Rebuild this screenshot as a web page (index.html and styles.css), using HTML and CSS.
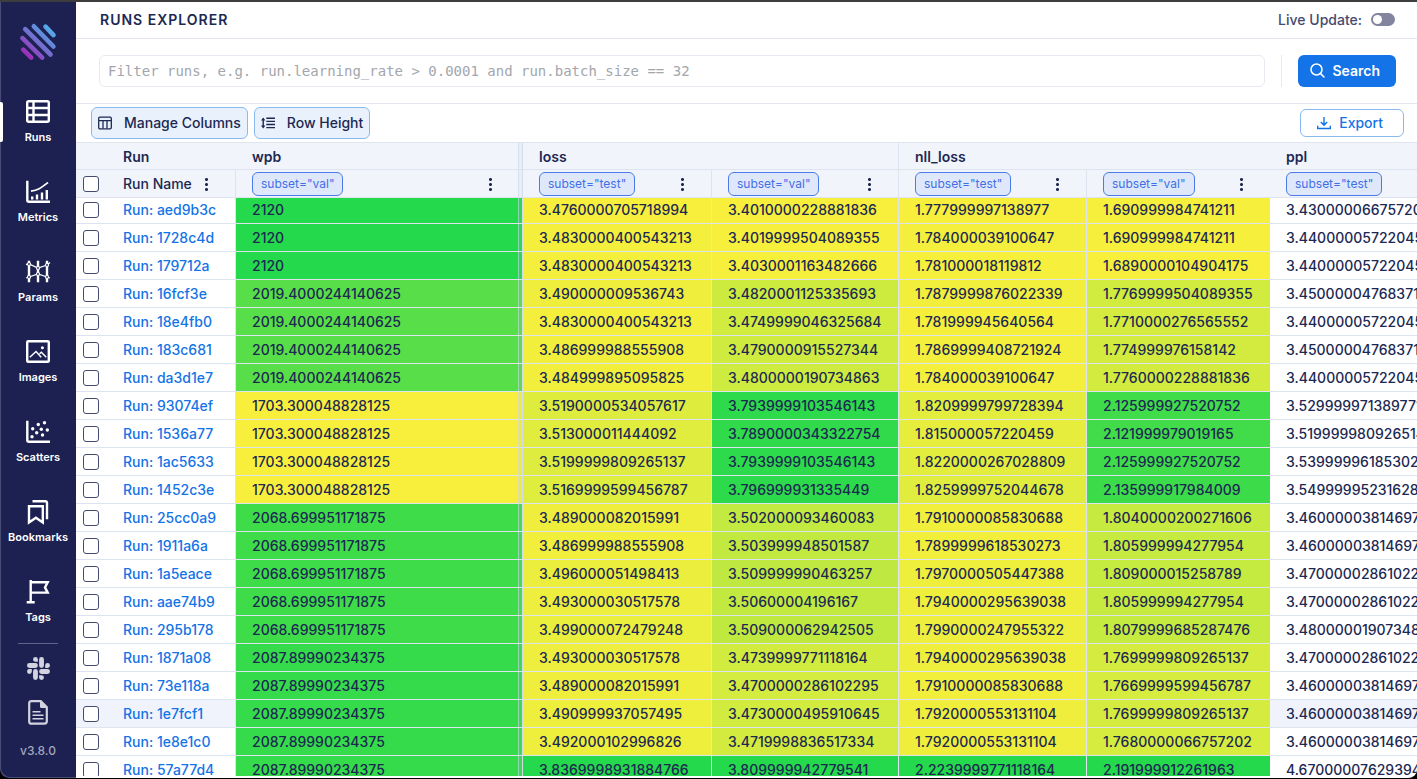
FILE: index.html
```
<!DOCTYPE html>
<html lang="en">
<head>
    <meta charset="UTF-8">
    <title>Runs Explorer</title>
    <link rel="stylesheet" href="styles.css">
</head>
<body>
<div class="app">
    <nav class="sidebar">
        <a class="logo" href="#">
            <svg width="38" height="38" viewBox="0 0 38 38" fill="none" stroke="url(#logoFill)" stroke-width="4.6" stroke-linecap="round">
                <defs>
                    <linearGradient id="logoFill" gradientUnits="userSpaceOnUse" x1="34" y1="3" x2="4" y2="35">
                        <stop offset="0" stop-color="#4cb8f0"/>
                        <stop offset="0.5" stop-color="#7270cf"/>
                        <stop offset="1" stop-color="#a81cb4"/>
                    </linearGradient>
                </defs>
                <path d="M26.5 3.7l8 8.4M14.8 3.3l19.6 20.2M6.2 6.2l25.3 25.3M3.4 15.1l19.8 19.5M4.2 26.6l8 8"/>
            </svg>
        </a>
        <a class="nav-item active" href="#">
            <svg class="nav-icon" viewBox="0 0 24 24">
                <rect x="1.2" y="1.2" width="21.6" height="20.6" rx="1.5"/>
                <path d="M7.5 1v21M1 8h22M1 15h22"/>
            </svg>
            <span>Runs</span>
        </a>
        <a class="nav-item" href="#">
            <svg class="nav-icon" viewBox="0 0 24 24">
                <path d="M1.3 .7v19.8a1.2 1.2 0 0 0 1.2 1.2H24"/>
                <path d="M5 11.2c7-1 9.5-3 17-8.7" stroke-width="1.8"/>
                <path d="M6.2 16.5v3M11 14.5v5M16 12.5v7M20.8 10v9.5"/>
            </svg>
            <span>Metrics</span>
        </a>
        <a class="nav-item" href="#">
            <svg class="nav-icon" viewBox="0 0 24 24">
                <path d="M3 .7v21.6M12 .7v21.6M21 .7v21.6" stroke-width="2.4"/>
                <path d="M0 4.5l3-.5 9 4 9-3 3-2.500M0 18l3-1 9-3 9 3 3 1" stroke-width="1.3"/>
                <g class="ring">
                    <circle cx="3" cy="4" r="1.5"/>
                    <circle cx="12" cy="8" r="1.5"/>
                    <circle cx="21" cy="5" r="1.5"/>
                    <circle cx="3" cy="17" r="1.5"/>
                    <circle cx="12" cy="14" r="1.5"/>
                    <circle cx="21" cy="17" r="1.5"/>
                </g>
            </svg>
            <span>Params</span>
        </a>
        <a class="nav-item" href="#">
            <svg class="nav-icon" viewBox="0 0 24 24">
                <rect x="1.2" y="1.2" width="21.6" height="20.6" rx="1"/>
                <path d="M3.8 17.2l6.2-5.7 5.2 5.7M13.5 13.8l1.8-1.6 5 5" stroke-width="1.5"/>
                <circle class="fill-dot" cx="16.4" cy="7.7" r="1.5"/>
            </svg>
            <span>Images</span>
        </a>
        <a class="nav-item" href="#">
            <svg class="nav-icon" viewBox="0 0 24 24">
                <path d="M1.3 .7v19.8a1.2 1.2 0 0 0 1.2 1.2H24"/>
                <g class="fill-dot">
                    <circle cx="6" cy="16.7" r="1.7"/>
                    <circle cx="6.7" cy="8.7" r="1.7"/>
                    <circle cx="10.7" cy="12.7" r="1.7"/>
                    <circle cx="12.3" cy="4.5" r="1.7"/>
                    <circle cx="15.3" cy="9.3" r="1.7"/>
                    <circle cx="16.5" cy="15" r="1.7"/>
                    <circle cx="18.5" cy="2.7" r="1.7"/>
                    <circle cx="21.3" cy="10" r="1.7"/>
                </g>
            </svg>
            <span>Scatters</span>
        </a>
        <a class="nav-item" href="#">
            <svg class="nav-icon" viewBox="0 0 24 24">
                <path d="M3 6.3h13.8v16.2l-6.9-4.8L3 22.5z"/>
                <path d="M6.5 1.2h12.9a1.6 1.6 0 0 1 1.6 1.6v16.5"/>
            </svg>
            <span>Bookmarks</span>
        </a>
        <a class="nav-item" href="#">
            <svg class="nav-icon" viewBox="0 0 24 24">
                <path d="M4.7 0v22.2M.7 22.2h8M4.7 2.2h17l-2.7 5.2 2.7 5.2h-17"/>
            </svg>
            <span>Tags</span>
        </a>
        <hr class="nav-line">
        <a class="nav-link" href="#" aria-label="Slack">
            <svg width="23" height="23" viewBox="0 0 24 24" fill="currentColor">
                <path d="M5.042 15.165a2.528 2.528 0 0 1-2.52 2.523A2.528 2.528 0 0 1 0 15.165a2.527 2.527 0 0 1 2.522-2.52h2.52v2.52zM6.313 15.165a2.527 2.527 0 0 1 2.521-2.52 2.527 2.527 0 0 1 2.521 2.52v6.313A2.528 2.528 0 0 1 8.834 24a2.528 2.528 0 0 1-2.521-2.522v-6.313zM8.834 5.042a2.528 2.528 0 0 1-2.521-2.52A2.528 2.528 0 0 1 8.834 0a2.528 2.528 0 0 1 2.521 2.522v2.52H8.834zM8.834 6.313a2.528 2.528 0 0 1 2.521 2.521 2.528 2.528 0 0 1-2.521 2.521H2.522A2.528 2.528 0 0 1 0 8.834a2.528 2.528 0 0 1 2.522-2.521h6.312zM18.956 8.834a2.528 2.528 0 0 1 2.522-2.521A2.528 2.528 0 0 1 24 8.834a2.528 2.528 0 0 1-2.522 2.521h-2.522V8.834zM17.688 8.834a2.528 2.528 0 0 1-2.523 2.521 2.527 2.527 0 0 1-2.52-2.521V2.522A2.527 2.527 0 0 1 15.165 0a2.528 2.528 0 0 1 2.523 2.522v6.312zM15.165 18.956a2.528 2.528 0 0 1 2.523 2.522A2.528 2.528 0 0 1 15.165 24a2.527 2.527 0 0 1-2.52-2.522v-2.522h2.52zM15.165 17.688a2.527 2.527 0 0 1-2.52-2.523 2.526 2.526 0 0 1 2.52-2.52h6.313A2.527 2.527 0 0 1 24 15.165a2.528 2.528 0 0 1-2.522 2.523h-6.313z"/>
            </svg>
        </a>
        <a class="nav-link" href="#" aria-label="Docs">
            <svg width="20" height="25" viewBox="0 0 20 25" fill="none" stroke="currentColor" stroke-width="2.2">
                <path d="M3.5 1.2h9.3l6 6v14a2.5 2.5 0 0 1-2.5 2.5H3.5A2.3 2.3 0 0 1 1.2 21.4V3.5a2.3 2.3 0 0 1 2.3-2.3z"/>
                <path d="M12 1v5.5a1.5 1.5 0 0 0 1.5 1.5H19z" fill="currentColor" stroke="none"/>
                <path d="M4.5 11.7h8M4.5 15.2h11M4.5 18.7h11" stroke-width="1.4"/>
            </svg>
        </a>
        <span class="version">v3.8.0</span>
    </nav>

    <main class="main">
        <header class="header">
            <h1>RUNS EXPLORER</h1>
            <label class="live">Live Update:
                <input type="checkbox" class="switch">
            </label>
        </header>

        <form class="search">
            <input type="text" class="search-input" aria-label="Filter runs" placeholder="Filter runs, e.g. run.learning_rate &gt; 0.0001 and run.batch_size == 32">
            <div class="search-side">
                <button type="button" class="btn-search">
                    <svg width="15" height="15" viewBox="0 0 15 15" fill="none" stroke="currentColor" stroke-width="1.5" stroke-linecap="round">
                        <circle cx="6.5" cy="6.5" r="5.5"/>
                        <path d="M10.6 10.6l3.4 3.4"/>
                    </svg>
                    Search
                </button>
            </div>
        </form>

        <div class="toolbar">
            <button type="button" class="btn-tool">
                <svg width="14" height="14" viewBox="0 0 14 14" fill="none" stroke="currentColor" stroke-width="1.3">
                    <rect x=".7" y="1.2" width="12.6" height="11.6" rx="1.2"/>
                    <path d="M1 4.6h12M5 4.6v8M9 4.6v8"/>
                </svg>
                Manage Columns
            </button>
            <button type="button" class="btn-tool">
                <svg width="14" height="14" viewBox="0 0 14 14" fill="none" stroke="currentColor" stroke-width="1.4">
                    <path d="M5.3 2.3H14M5.3 5.4H14M5.3 8.5H14M5.3 11.6H14M2.2 3v8"/>
                    <path d="M2.2 1.4l2.2 3H0zM2.2 12.6l2.2-3H0z" fill="currentColor" stroke="none"/>
                </svg>
                Row Height
            </button>
            <button type="button" class="btn-export">
                <svg width="14" height="14" viewBox="0 0 14 14" fill="none" stroke="currentColor" stroke-width="1.4">
                    <path d="M7 1v8M3.8 6L7 9.2 10.2 6M.7 9.8v2.7h12.6V9.8"/>
                </svg>
                Export
            </button>
        </div>

        <div class="table-box">
            <table class="runs">
                <colgroup>
                    <col class="col-check">
                    <col class="col-name">
                    <col class="col-wpb">
                    <col class="col-loss-test">
                    <col class="col-loss-val">
                    <col class="col-nll-test">
                    <col class="col-nll-val">
                    <col class="col-ppl">
                </colgroup>
                <thead>
                <tr class="groups">
                    <th></th>
                    <th>Run</th>
                    <th class="pinned">wpb</th>
                    <th colspan="2" class="line">loss</th>
                    <th colspan="2">nll_loss</th>
                    <th>ppl</th>
                </tr>
                <tr class="heads">
                    <th class="check"><input type="checkbox" aria-label="Select all runs"></th>
                    <th class="line"><div class="head">Run Name <button type="button" class="dots" aria-label="Column menu"></button></div></th>
                    <th class="pinned"><div class="head"><span class="pill">subset="val"</span><button type="button" class="dots" aria-label="Column menu"></button></div></th>
                    <th class="line"><div class="head"><span class="pill">subset="test"</span><button type="button" class="dots" aria-label="Column menu"></button></div></th>
                    <th class="line"><div class="head"><span class="pill">subset="val"</span><button type="button" class="dots" aria-label="Column menu"></button></div></th>
                    <th class="line"><div class="head"><span class="pill">subset="test"</span><button type="button" class="dots" aria-label="Column menu"></button></div></th>
                    <th><div class="head"><span class="pill">subset="val"</span><button type="button" class="dots" aria-label="Column menu"></button></div></th>
                    <th><div class="head"><span class="pill">subset="test"</span></div></th>
                </tr>
                </thead>
                <tbody id="rows"></tbody>
            </table>
        </div>
    </main>
</div>
<script src="runs.js"></script>
</body>
</html>
```

FILE: styles.css
```
* {
    box-sizing: border-box;
    margin: 0;
    padding: 0;
}

body {
    background: #000;
    color: #1c2852;
    font-family: Inter, "Liberation Sans", sans-serif;
    font-size: 14px;
    font-weight: 500;
}

button, input {
    font: inherit;
    color: inherit;
}

button {
    cursor: pointer;
}

a {
    color: #1473e6;
    text-decoration: none;
}

.app {
    display: flex;
    height: 100vh;
    border-top: 2px solid #3d3d3f;
    border-bottom: 1px solid #000;
    border-radius: 0 0 9px 9px;
    overflow: hidden;
}

/* sidebar */
.sidebar {
    flex: none;
    width: 76px;
    display: flex;
    flex-direction: column;
    align-items: center;
    background: #1c2152;
    box-shadow: inset 1px -1px 0 #474b75;
    border-bottom-left-radius: 9px;
}

.logo {
    height: 80px;
    display: flex;
    align-items: center;
}

.nav-item {
    position: relative;
    width: 100%;
    height: 80px;
    display: flex;
    flex-direction: column;
    align-items: center;
    justify-content: center;
    gap: 5px;
    color: #fff;
    font-size: 11px;
    font-weight: 600;
    line-height: 16px;
}

.nav-item.active::before {
    content: "";
    position: absolute;
    left: 0;
    top: 20px;
    width: 3px;
    height: 40px;
    background: #fff;
    border-radius: 0 2px 2px 0;
}

.nav-icon {
    width: 24px;
    height: 24px;
    fill: none;
    stroke: #fff;
    stroke-width: 2.4;
    overflow: visible;
}

.fill-dot {
    fill: #fff;
    stroke: none;
}

.ring {
    fill: #1c2152;
    stroke-width: 1.2;
}

.nav-line {
    width: 40px;
    border: 0;
    border-top: 1px solid #60638a;
    margin: 1px 0 2px;
}

.nav-link {
    height: 44px;
    display: flex;
    align-items: center;
    color: #d2d3de;
}

.version {
    margin-top: 9px;
    color: #a4a6ba;
    font-size: 12px;
    line-height: 16px;
}

/* main */
.main {
    flex: 1;
    min-width: 0;
    display: flex;
    flex-direction: column;
    padding-bottom: 2px;
    background: #fff;
}

.header {
    flex: none;
    height: 37px;
    display: flex;
    align-items: center;
    justify-content: space-between;
    padding: 0 22px 1px 24px;
    border-bottom: 1px solid #e3e6ee;
}

.header h1 {
    font-size: 14px;
    font-weight: 600;
    letter-spacing: 1px;
}

.live {
    display: flex;
    align-items: center;
    gap: 9px;
    color: #454a70;
}

.switch {
    appearance: none;
    width: 24px;
    height: 13px;
    padding: 2px;
    border-radius: 7px;
    background: #83859f;
}

.switch::before {
    content: "";
    display: block;
    width: 9px;
    height: 9px;
    border-radius: 50%;
    background: #fff;
}

.search {
    flex: none;
    height: 65px;
    display: flex;
    align-items: center;
    gap: 16px;
    padding: 0 21px 0 23px;
    border-bottom: 1px solid #e3e6ee;
}

.search-input {
    flex: 1;
    height: 32px;
    padding: 0 8px;
    border: 1px solid #e8eaf1;
    border-radius: 6px;
    font-family: "DejaVu Sans Mono", monospace;
    font-weight: 400;
}

.search-input::placeholder {
    color: #a3a6ad;
    line-height: 30px;
    overflow: visible;
}

.search-side {
    padding-left: 16px;
    border-left: 1px solid #e8eaf1;
}

.btn-search {
    display: flex;
    align-items: center;
    gap: 7px;
    height: 32px;
    padding: 0 16px 1px 12px;
    border: 0;
    border-radius: 6px;
    background: #1473e6;
    color: #fff;
    font-weight: 600;
}

.toolbar {
    flex: none;
    height: 38px;
    display: flex;
    align-items: center;
    gap: 6px;
    padding: 0 13px 0 15px;
}

.btn-tool {
    display: flex;
    align-items: center;
    gap: 12px;
    height: 32px;
    padding: 0 6px 1px;
    border: 1px solid #8ab9f0;
    border-radius: 6px;
    background: #e8f1fc;
}

.btn-export {
    display: flex;
    align-items: center;
    gap: 8px;
    height: 28px;
    margin-left: auto;
    padding: 0 20px 1px 16px;
    border: 1px solid #8ab9f0;
    border-radius: 6px;
    background: #fff;
    color: #1473e6;
}

/* table */
.table-box {
    flex: 1;
    min-height: 0;
    overflow: hidden;
    border-top: 1px solid #dfe4ef;
}

.runs {
    width: 1383px;
    table-layout: fixed;
    border-collapse: separate;
    border-spacing: 0;
}

.col-check { width: 31px; }
.col-name { width: 129px; }
.col-wpb { width: 287px; }
.col-loss-test { width: 189px; }
.col-loss-val { width: 187px; }
.col-nll-test { width: 188px; }
.col-nll-val { width: 183px; }
.col-ppl { width: 189px; }

.runs th, .runs td {
    padding: 0 16px;
    border-bottom: 1px solid #dde4ef;
    text-align: left;
    white-space: nowrap;
}

.runs th {
    background: #f1f4fb;
}

.groups th {
    height: 27px;
    font-weight: 600;
}

.heads th {
    height: 28px;
    font-weight: 500;
}

.runs td {
    height: 28px;
}

.runs .line {
    border-right: 1px solid #dde4ef;
}

/* frozen column edge */
.runs .pinned {
    position: relative;
    padding-right: 19px;
    border-right: 1px solid #d3dce8;
}

.pinned::after {
    content: "";
    position: absolute;
    top: 0;
    right: 0;
    bottom: 0;
    width: 3px;
    border-left: 1px solid rgba(205, 216, 232, 0.6);
    background: rgba(150, 185, 210, 0.1);
}

.runs .check {
    padding: 0 0 0 7px;
}

.runs tbody tr:first-child td {
    height: 26px;
    padding-bottom: 2px;
}

.runs .hover td {
    background: #f0f3fb;
}

.check input {
    appearance: none;
    display: block;
    width: 16px;
    height: 16px;
    border: 1px solid #454a70;
    border-radius: 3px;
    background: #fff;
}

.check input:checked {
    background: #1473e6;
}

.head {
    display: flex;
    align-items: center;
    justify-content: space-between;
}

.pill {
    height: 24px;
    padding: 0 8px;
    border: 1px solid #4a7be6;
    border-radius: 6px;
    background: #dfe8fa;
    color: #3f6fe8;
    font-size: 12px;
    font-weight: 400;
    line-height: 22px;
}

.dots {
    width: 26px;
    height: 24px;
    border: 0;
    background: radial-gradient(circle, #1c2852 1px, transparent 2px) center / 5px 5px repeat-y;
    background-clip: content-box;
    background-origin: content-box;
    padding: 5px 10px 4px;
}
```

FILE: runs.js
```
var low = [247, 239, 60];
var high = [37, 217, 76];

// name, wpb, loss test, loss val, nll_loss test, nll_loss val, ppl
var data = [
    ["aed9b3c", "2120", "3.4760000705718994", "3.4010000228881836", "1.777999997138977", "1.690999984741211", "3.430000066757202"],
    ["1728c4d", "2120", "3.4830000400543213", "3.4019999504089355", "1.784000039100647", "1.690999984741211", "3.440000057220459"],
    ["179712a", "2120", "3.4830000400543213", "3.4030001163482666", "1.781000018119812", "1.6890000104904175", "3.440000057220459"],
    ["16fcf3e", "2019.4000244140625", "3.490000009536743", "3.4820001125335693", "1.7879999876022339", "1.7769999504089355", "3.450000047683716"],
    ["18e4fb0", "2019.4000244140625", "3.4830000400543213", "3.4749999046325684", "1.781999945640564", "1.7710000276565552", "3.440000057220459"],
    ["183c681", "2019.4000244140625", "3.486999988555908", "3.4790000915527344", "1.7869999408721924", "1.774999976158142", "3.450000047683716"],
    ["da3d1e7", "2019.4000244140625", "3.484999895095825", "3.4800000190734863", "1.784000039100647", "1.7760000228881836", "3.440000057220459"],
    ["93074ef", "1703.300048828125", "3.5190000534057617", "3.7939999103546143", "1.8209999799728394", "2.125999927520752", "3.529999971389771"],
    ["1536a77", "1703.300048828125", "3.513000011444092", "3.7890000343322754", "1.815000057220459", "2.121999979019165", "3.519999980926514"],
    ["1ac5633", "1703.300048828125", "3.5199999809265137", "3.7939999103546143", "1.8220000267028809", "2.125999927520752", "3.539999961853027"],
    ["1452c3e", "1703.300048828125", "3.5169999599456787", "3.796999931335449", "1.8259999752044678", "2.135999917984009", "3.549999952316284"],
    ["25cc0a9", "2068.699951171875", "3.489000082015991", "3.502000093460083", "1.7910000085830688", "1.8040000200271606", "3.460000038146973"],
    ["1911a6a", "2068.699951171875", "3.486999988555908", "3.503999948501587", "1.7899999618530273", "1.805999994277954", "3.460000038146973"],
    ["1a5eace", "2068.699951171875", "3.496000051498413", "3.509999990463257", "1.7970000505447388", "1.809000015258789", "3.470000028610229"],
    ["aae74b9", "2068.699951171875", "3.493000030517578", "3.50600004196167", "1.7940000295639038", "1.805999994277954", "3.470000028610229"],
    ["295b178", "2068.699951171875", "3.499000072479248", "3.509000062942505", "1.7990000247955322", "1.8079999685287476", "3.480000019073486"],
    ["1871a08", "2087.89990234375", "3.493000030517578", "3.4739999771118164", "1.7940000295639038", "1.7699999809265137", "3.470000028610229"],
    ["73e118a", "2087.89990234375", "3.489000082015991", "3.4700000286102295", "1.7910000085830688", "1.7669999599456787", "3.460000038146973"],
    ["1e7fcf1", "2087.89990234375", "3.490999937057495", "3.4730000495910645", "1.7920000553131104", "1.7699999809265137", "3.460000038146973"],
    ["1e8e1c0", "2087.89990234375", "3.492000102996826", "3.4719998836517334", "1.7920000553131104", "1.7680000066757202", "3.460000038146973"],
    ["57a77d4", "2087.89990234375", "3.8369998931884766", "3.809999942779541", "2.2239999771118164", "2.191999912261963", "4.670000076293945"]
];
var current = "1e7fcf1";
var classes = ["", "pinned", "line", "line", "line", "", ""];

function getRange(n) {
    var list = data.map(function (row) {
        return Number(row[n]);
    });
    return [Math.min.apply(null, list), Math.max.apply(null, list)];
}

function getColor(value, range) {
    var t = (value - range[0]) / (range[1] - range[0]);
    var rgb = low.map(function (c, i) {
        return Math.round(c + (high[i] - c) * t);
    });
    return "rgb(" + rgb.join(",") + ")";
}

bind();
function bind() {
    var str = "";
    for (var i = 0; i < data.length; i++) {
        var row = data[i];
        str += '<tr' + (row[0] === current ? ' class="hover"' : '') + '>';
        str += '<td class="check"><input type="checkbox" aria-label="Select run ' + row[0] + '"></td>';
        str += '<td class="line"><a href="#">Run: ' + row[0] + '</a></td>';
        for (var j = 1; j < row.length; j++) {
            // ppl has no color scale
            var style = j < 6 ? ' style="background:' + getColor(row[j], getRange(j)) + '"' : '';
            str += '<td class="' + classes[j] + '"' + style + '>' + row[j] + '</td>';
        }
        str += '</tr>';
    }
    document.getElementById("rows").innerHTML = str;
}
```
